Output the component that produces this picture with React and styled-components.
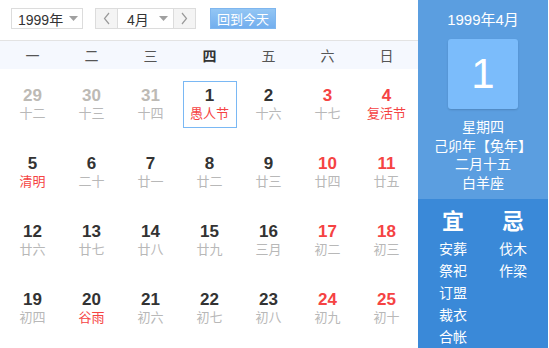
import React from 'react';
import styled, { createGlobalStyle } from 'styled-components';

const GlobalStyle = createGlobalStyle`
  body {
    margin: 0;
    background: #fff;
    font-family: "Liberation Sans", "Noto Sans CJK SC", sans-serif;
  }
`;

const weekNames = ['一', '二', '三', '四', '五', '六', '日'];

const weeks = [
  [
    { day: 29, lunar: '十二', other: true },
    { day: 30, lunar: '十三', other: true },
    { day: 31, lunar: '十四', other: true },
    { day: 1, lunar: '愚人节', fest: true, today: true },
    { day: 2, lunar: '十六' },
    { day: 3, lunar: '十七' },
    { day: 4, lunar: '复活节', fest: true },
  ],
  [
    { day: 5, lunar: '清明', fest: true },
    { day: 6, lunar: '二十' },
    { day: 7, lunar: '廿一' },
    { day: 8, lunar: '廿二' },
    { day: 9, lunar: '廿三' },
    { day: 10, lunar: '廿四' },
    { day: 11, lunar: '廿五' },
  ],
  [
    { day: 12, lunar: '廿六' },
    { day: 13, lunar: '廿七' },
    { day: 14, lunar: '廿八' },
    { day: 15, lunar: '廿九' },
    { day: 16, lunar: '三月' },
    { day: 17, lunar: '初二' },
    { day: 18, lunar: '初三' },
  ],
  [
    { day: 19, lunar: '初四' },
    { day: 20, lunar: '谷雨', fest: true },
    { day: 21, lunar: '初六' },
    { day: 22, lunar: '初七' },
    { day: 23, lunar: '初八' },
    { day: 24, lunar: '初九' },
    { day: 25, lunar: '初十' },
  ],
];

const goodList = ['安葬', '祭祀', '订盟', '裁衣', '合帐'];
const badList = ['伐木', '作梁'];

function Caret() {
  return (
    <svg width="9" height="5" viewBox="0 0 9 5">
      <path d="M0 0 L9 0 L4.5 5 Z" fill="#a0a0a0" />
    </svg>
  );
}

function Chevron({ dir }) {
  const d = dir === 'left' ? 'M6 1 L1.5 6.5 L6 12' : 'M1 1 L5.5 6.5 L1 12';
  return (
    <svg width="7" height="13" viewBox="0 0 7 13">
      <path d={d} fill="none" stroke="#9a9a9a" strokeWidth="1.2" />
    </svg>
  );
}

export default function App() {
  return (
    <>
      <GlobalStyle />
      <Widget>
        <Main>
          <Toolbar>
            <Select width={72}>
              <span>1999年</span>
              <Caret />
            </Select>
            <MonthGroup>
              <StepButton><Chevron dir="left" /></StepButton>
              <MonthSelect>
                <span>4月</span>
                <Caret />
              </MonthSelect>
              <StepButton><Chevron dir="right" /></StepButton>
            </MonthGroup>
            <TodayButton>回到今天</TodayButton>
          </Toolbar>
          <WeekHeader>
            {weekNames.map((w, i) => (
              <WeekName key={w} current={i === 3}>{w}</WeekName>
            ))}
          </WeekHeader>
          <DayGrid>
            {weeks.map((row) =>
              row.map((c, i) => (
                <Cell key={`${c.day}-${c.lunar}`}>
                  <DayBox today={c.today}>
                    <DayNum other={c.other} weekend={i >= 5}>{c.day}</DayNum>
                    <Lunar fest={c.fest}>{c.lunar}</Lunar>
                  </DayBox>
                </Cell>
              ))
            )}
          </DayGrid>
        </Main>
        <Side>
          <SideTop>
            <MonthTitle>1999年4月</MonthTitle>
            <BigDay>1</BigDay>
            <InfoLines>
              <div>星期四</div>
              <div>己卯年【兔年】</div>
              <div>二月十五</div>
              <div>白羊座</div>
            </InfoLines>
          </SideTop>
          <SideBottom>
            <Column>
              <ColTitle>宜</ColTitle>
              <Items>
                {goodList.map((t) => <div key={t}>{t}</div>)}
              </Items>
            </Column>
            <Column>
              <ColTitle>忌</ColTitle>
              <Items>
                {badList.map((t) => <div key={t}>{t}</div>)}
              </Items>
            </Column>
          </SideBottom>
        </Side>
      </Widget>
    </>
  );
}

const Widget = styled.div`
  display: flex;
  width: 548px;
  height: 348px;
  overflow: hidden;
`;

const Main = styled.div`
  width: 418px;
  display: flex;
  flex-direction: column;
`;

const Toolbar = styled.div`
  height: 40px;
  box-sizing: border-box;
  padding: 8px 0 0 11px;
  display: flex;
  align-items: flex-start;
`;

const Select = styled.div`
  width: ${(p) => p.width}px;
  height: 21px;
  box-sizing: border-box;
  border: 1px solid #dcdcdc;
  background: #fff;
  display: flex;
  align-items: center;
  justify-content: space-between;
  padding: 0 4px 0 6px;
  font-size: 14px;
  color: #333;
  margin-right: 12px;
`;

const MonthGroup = styled.div`
  display: flex;
  height: 21px;
  box-sizing: border-box;
  border: 1px solid #dcdcdc;
  margin-right: 14px;
`;

const StepButton = styled.div`
  width: 21px;
  background: #f4f4f4;
  display: flex;
  align-items: center;
  justify-content: center;
`;

const MonthSelect = styled.div`
  width: 57px;
  box-sizing: border-box;
  border-left: 1px solid #dcdcdc;
  border-right: 1px solid #dcdcdc;
  background: #fff;
  display: flex;
  align-items: center;
  justify-content: space-between;
  padding: 0 5px 0 9px;
  font-size: 14px;
  color: #333;
`;

const TodayButton = styled.div`
  width: 66px;
  height: 21px;
  box-sizing: border-box;
  border: 1px solid #7fb6ee;
  background: linear-gradient(#93c6f4, #72aeee);
  color: #fff;
  font-size: 13px;
  display: flex;
  align-items: center;
  justify-content: center;
`;

const WeekHeader = styled.div`
  height: 29px;
  box-sizing: border-box;
  border-top: 1px solid #e3e3e3;
  background: #f5f8fe;
  display: grid;
  grid-template-columns: repeat(7, 59px);
  padding-left: 3px;
  align-items: center;
`;

const WeekName = styled.div`
  text-align: center;
  font-size: 14px;
  color: ${(p) => (p.current ? '#333' : '#555')};
  font-weight: ${(p) => (p.current ? 'bold' : 'normal')};
`;

const DayGrid = styled.div`
  display: grid;
  grid-template-columns: repeat(7, 59px);
  grid-auto-rows: 68px;
  padding: 1px 0 0 3px;
`;

const Cell = styled.div`
  display: flex;
  align-items: center;
  justify-content: center;
`;

const DayBox = styled.div`
  width: 54px;
  height: 47px;
  box-sizing: border-box;
  border: 1px solid ${(p) => (p.today ? '#7ab8f4' : 'transparent')};
  display: flex;
  flex-direction: column;
  align-items: center;
  justify-content: center;
`;

const DayNum = styled.div`
  font-size: 17px;
  font-weight: bold;
  line-height: 19px;
  color: ${(p) => (p.other ? '#bdbab5' : p.weekend ? '#f54343' : '#333')};
`;

const Lunar = styled.div`
  font-size: 13px;
  line-height: 17px;
  color: ${(p) => (p.fest ? '#f54343' : '#b8b8b8')};
`;

const Side = styled.div`
  width: 130px;
  display: flex;
  flex-direction: column;
  color: #fff;
`;

const SideTop = styled.div`
  height: 199px;
  background: #5b9ee0;
  display: flex;
  flex-direction: column;
  align-items: center;
`;

const MonthTitle = styled.div`
  font-size: 15px;
  line-height: 18px;
  margin-top: 11px;
`;

const BigDay = styled.div`
  width: 70px;
  height: 70px;
  margin-top: 10px;
  border-radius: 3px;
  background: #7bbcfb;
  box-shadow: 0 1px 2px rgba(0, 0, 0, 0.15);
  display: flex;
  align-items: center;
  justify-content: center;
  font-size: 42px;
  font-weight: 300;
`;

const InfoLines = styled.div`
  margin-top: 9px;
  font-size: 14px;
  line-height: 18.5px;
  text-align: center;
`;

const SideBottom = styled.div`
  flex: 1;
  background: #3a89d8;
  display: grid;
  grid-template-columns: 60px 60px;
  padding: 10px 5px 0;
`;

const Column = styled.div`
  display: flex;
  flex-direction: column;
  align-items: center;
`;

const ColTitle = styled.div`
  font-size: 22px;
  font-weight: bold;
  line-height: 26px;
`;

const Items = styled.div`
  margin-top: 3px;
  font-size: 14px;
  line-height: 22px;
  text-align: center;
`;
